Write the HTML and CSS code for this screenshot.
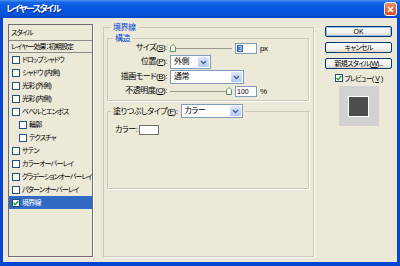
FILE: index.html
```html
<!DOCTYPE html>
<html lang="ja">
<head>
    <meta charset="UTF-8">
    <title>レイヤースタイル</title>
    <link rel="stylesheet" href="styles.css">
</head>
<body>
    <div class="window">
        <div class="titlebar">
            <span class="title">レイヤースタイル</span>
            <span class="close">
                <svg width="7" height="7" viewBox="0 0 7 7"><path d="M1 1 L6 6 M6 1 L1 6" stroke="#fff" stroke-width="1.6"/></svg>
            </span>
        </div>

        <div class="client">
            <div class="style-list">
                <div class="list-head">スタイル</div>
                <div class="list-head sub">レイヤー効果：初期設定</div>
                <ul class="effects">
                    <li><span class="check"></span>ドロップシャドウ</li>
                    <li><span class="check"></span>シャドウ (内側)</li>
                    <li><span class="check"></span>光彩 (外側)</li>
                    <li><span class="check"></span>光彩 (内側)</li>
                    <li><span class="check"></span>ベベルとエンボス</li>
                    <li class="indent"><span class="check"></span>輪郭</li>
                    <li class="indent"><span class="check"></span>テクスチャ</li>
                    <li><span class="check"></span>サテン</li>
                    <li><span class="check"></span>カラーオーバーレイ</li>
                    <li class="tight"><span class="check"></span>グラデーションオーバーレイ</li>
                    <li><span class="check"></span>パターンオーバーレイ</li>
                    <li class="selected"><span class="check"><svg width="6" height="6" viewBox="0 0 6 6"><path d="M0.5 3 L2.2 4.8 L5.5 1" fill="none" stroke="#21A121" stroke-width="1.4"/></svg></span>境界線</li>
                </ul>
            </div>

            <fieldset class="group main-group">
                <legend>境界線</legend>
                <fieldset class="group structure">
                    <legend>構造</legend>
                    <div class="form-grid">
                        <label class="row-label">サイズ(<u>S</u>):</label>
                        <div class="row-control short">
                            <div class="slider">
                                <svg class="thumb" width="6" height="8" viewBox="0 0 6 8"><path d="M0.5 7.5 V2.8 L3 0.5 L5.5 2.8 V7.5 Z" fill="#fff" stroke="#4E9F56"/></svg>
                            </div>
                            <span class="num"><span class="sel">3</span></span>
                            <span>px</span>
                        </div>

                        <label class="row-label">位置(<u>P</u>):</label>
                        <div class="row-control">
                            <div class="select w-pos"><span>外側</span><i class="arrow"><svg width="7" height="5" viewBox="0 0 7 5"><path d="M1 1 L3.5 3.5 L6 1" fill="none" stroke="#4D6185" stroke-width="1.4"/></svg></i></div>
                        </div>

                        <label class="row-label">描画モード(<u>B</u>):</label>
                        <div class="row-control">
                            <div class="select w-blend"><span>通常</span><i class="arrow"><svg width="7" height="5" viewBox="0 0 7 5"><path d="M1 1 L3.5 3.5 L6 1" fill="none" stroke="#4D6185" stroke-width="1.4"/></svg></i></div>
                        </div>

                        <label class="row-label">不透明度(<u>O</u>):</label>
                        <div class="row-control short">
                            <div class="slider end">
                                <svg class="thumb" width="6" height="8" viewBox="0 0 6 8"><path d="M0.5 7.5 V2.8 L3 0.5 L5.5 2.8 V7.5 Z" fill="#fff" stroke="#4E9F56"/></svg>
                            </div>
                            <span class="num">100</span>
                            <span>%</span>
                        </div>
                    </div>
                </fieldset>

                <fieldset class="group fill">
                    <legend>
                        <label>塗りつぶしタイプ(<u>F</u>):</label>
                        <div class="select w-fill"><span>カラー</span><i class="arrow"><svg width="7" height="5" viewBox="0 0 7 5"><path d="M1 1 L3.5 3.5 L6 1" fill="none" stroke="#4D6185" stroke-width="1.4"/></svg></i></div>
                    </legend>
                    <div class="color-row">
                        <span>カラー:</span>
                        <span class="swatch"></span>
                    </div>
                </fieldset>
            </fieldset>

            <div class="side">
                <button class="btn default">OK</button>
                <button class="btn">キャンセル</button>
                <button class="btn">新規スタイル(<u>W</u>)...</button>
                <label class="preview-check"><span class="check"><svg width="6" height="6" viewBox="0 0 6 6"><path d="M0.5 3 L2.2 4.8 L5.5 1" fill="none" stroke="#21A121" stroke-width="1.4"/></svg></span>プレビュー(<u>V</u>)</label>
                <div class="preview">
                    <div class="preview-swatch"></div>
                </div>
            </div>
        </div>
    </div>
</body>
</html>
```

FILE: styles.css
```css
* {
    margin: 0;
    padding: 0;
    box-sizing: border-box;
}

body {
    font-family: "Liberation Sans", "Noto Sans CJK JP", sans-serif;
    font-size: 8px;
    line-height: 11px;
    letter-spacing: -0.5px;
    color: #000;
    font-feature-settings: "palt" 1;
    background: #fff;
}

.window {
    width: 400px;
    height: 266px;
    display: flex;
    flex-direction: column;
    background: #0844D2;
}

/* title bar */
.titlebar {
    height: 18px;
    display: flex;
    align-items: center;
    justify-content: space-between;
    padding: 0 3px 0 6px;
    background: linear-gradient(to bottom, #4A90F5 0%, #1463E8 14%, #0758DF 45%, #0653D8 80%, #0646C4 100%);
    color: #fff;
}

.title {
    font-size: 9px;
    font-weight: bold;
    letter-spacing: -1.6px;
    text-shadow: 1px 1px 0 #0A2E8C;
}

.close {
    width: 13px;
    height: 14px;
    border: 1px solid #fff;
    border-radius: 3px;
    background: linear-gradient(#EE8E6A, #D64A20);
    display: flex;
    align-items: center;
    justify-content: center;
}

.client {
    flex: 1;
    margin: 0 3px 4px;
    background: #ECE9D8;
    display: flex;
}

/* left list */
.style-list {
    width: 85px;
    margin: 6px 0 5px 5px;
    border: 1px solid #6E6E6E;
    box-shadow: 1px 1px 0 #fff;
    font-size: 7px;
    letter-spacing: -0.8px;
    overflow: hidden;
}

.list-head {
    height: 16px;
    line-height: 15px;
    padding-left: 2px;
    border-bottom: 1px solid #8A8A8A;
}

.list-head.sub {
    height: 12px;
    line-height: 11px;
}

.effects {
    list-style: none;
}

.effects li {
    height: 13px;
    display: flex;
    align-items: center;
    gap: 2px;
    padding-left: 3px;
    white-space: nowrap;
}

.effects li.tight {
    letter-spacing: -1px;
}

.effects li.indent {
    padding-left: 10px;
}

.effects li.selected {
    background: #316AC5;
    color: #fff;
}

.check {
    width: 8px;
    height: 8px;
    flex: none;
    border: 1px solid #1C5180;
    background: #fff;
    display: flex;
    align-items: center;
    justify-content: center;
}

/* group boxes */
.group {
    border: 1px solid #CBC8B8;
    box-shadow: 1px 1px 0 #fff;
    min-width: 0;
}

.group legend {
    padding: 0 2px;
    line-height: 11px;
    color: #0046D5;
}

.main-group {
    width: 211px;
    margin: 4px 0 5px 10px;
    padding: 0 4px 0 3px;
}

.main-group > legend {
    margin-left: 4px;
}

.structure {
    padding: 0 0 3px 0;
}

.structure > legend {
    margin-left: 5px;
}

.form-grid {
    margin-top: -2px;
    display: grid;
    grid-template-columns: 59px 1fr;
    grid-template-rows: 12px 14px 14px 12px;
    column-gap: 3px;
    row-gap: 1px;
}

.row-label {
    text-align: right;
    line-height: 12px;
    align-self: center;
    white-space: nowrap;
}

.row-control {
    display: flex;
    align-items: center;
    gap: 3px;
}

.slider {
    width: 62px;
    height: 8px;
    display: flex;
    align-items: center;
    background: linear-gradient(#9C9A8E, #9C9A8E) center / 100% 1px no-repeat;
}

.slider.end {
    justify-content: flex-end;
}

.thumb {
    display: block;
}

.num {
    width: 22px;
    height: 11px;
    border: 1px solid #7F9DB9;
    background: #fff;
    padding-left: 1px;
    line-height: 9px;
    font-size: 7px;
    letter-spacing: 0;
}

.num .sel {
    background: #316AC5;
    color: #fff;
    padding: 0 1px;
}

.select {
    height: 14px;
    display: flex;
    border: 1px solid #7F9DB9;
    background: #fff;
    color: #000;
}

.select span {
    flex: 1;
    padding-left: 3px;
    line-height: 12px;
}

.select .arrow {
    width: 11px;
    margin: 1px;
    border-radius: 1px;
    background: linear-gradient(#DCE7FD, #B4CAF5);
    display: flex;
    align-items: center;
    justify-content: center;
}

.w-pos {
    width: 41px;
}

.w-blend {
    width: 74px;
}

.w-fill {
    width: 62px;
}

.fill {
    margin-top: 3px;
    padding: 0 0 53px 7px;
}

.fill > legend {
    margin-left: -4px;
    display: flex;
    align-items: center;
    gap: 3px;
    color: #000;
}

.color-row {
    margin-top: 6px;
    display: flex;
    align-items: center;
    gap: 2px;
}

.swatch {
    width: 20px;
    height: 10px;
    border: 1px solid #6E6E6E;
    background: #fff;
}

/* right column */
.side {
    width: 67px;
    margin: 8px 5px 0 auto;
    display: flex;
    flex-direction: column;
    align-items: center;
    font-size: 7px;
    letter-spacing: -0.7px;
}

.btn {
    width: 67px;
    height: 11px;
    margin-bottom: 5px;
    border: 1px solid #003C74;
    border-radius: 2px;
    background: linear-gradient(#FFFFFF, #F3F2EC 60%, #DAD5CA);
    font: inherit;
    letter-spacing: inherit;
    line-height: 9px;
    text-align: center;
    color: #000;
}

.btn.default {
    box-shadow: inset 0 0 0 1px #9DBBEE;
    letter-spacing: 0;
}

.preview-check {
    margin-top: -1px;
    height: 10px;
    display: flex;
    align-items: center;
    gap: 2px;
    letter-spacing: -0.9px;
}

.preview {
    width: 40px;
    height: 40px;
    margin-top: 3px;
    background: #D2D2D2;
    display: flex;
    align-items: center;
    justify-content: center;
}

.preview-swatch {
    width: 21px;
    height: 21px;
    border: 1px solid #fff;
    background: #4E4E4E;
}
```
